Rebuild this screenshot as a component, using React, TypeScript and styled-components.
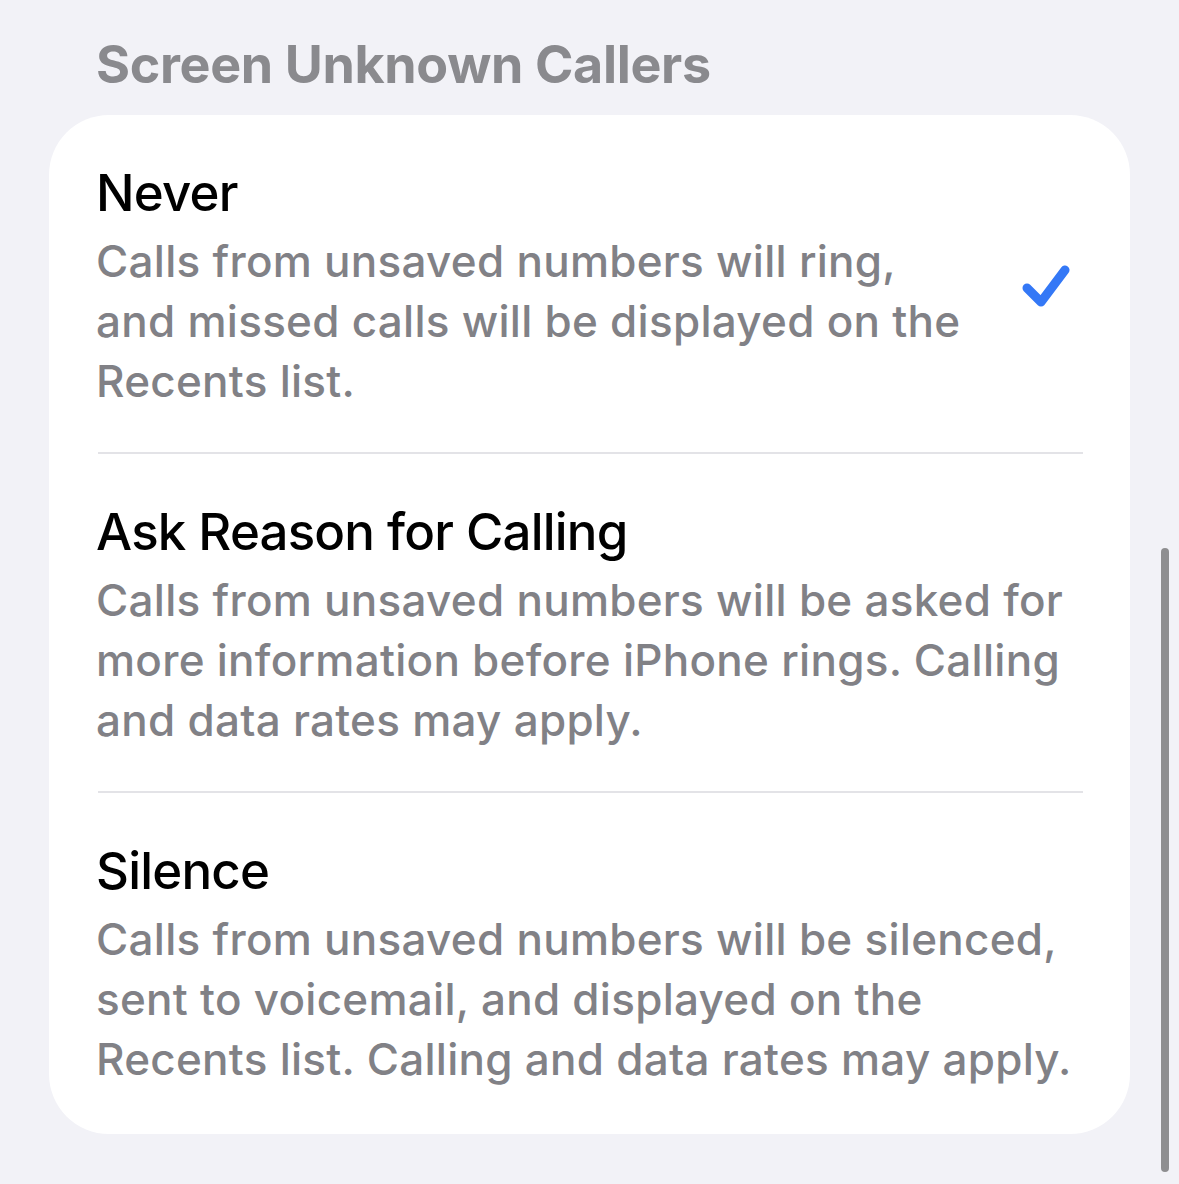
import React from 'react';
import styled, { createGlobalStyle } from 'styled-components';

const GlobalStyle = createGlobalStyle`
  html, body {
    margin: 0;
    padding: 0;
    background: #f2f2f7;
  }
  body {
    font-family: Inter, "Noto Sans", sans-serif;
    -webkit-font-smoothing: antialiased;
  }
`;

const Page = styled.div`
  position: relative;
  width: 1179px;
  height: 1184px;
  overflow: hidden;
  background: #f2f2f7;
  padding: 0 49px;
  box-sizing: border-box;
`;

const SectionHeader = styled.h2`
  margin: 0;
  padding: 33px 0 0 47px;
  height: 115px;
  box-sizing: border-box;
  font-size: 52px;
  line-height: 64px;
  font-weight: 700;
  color: #8a8a8e;
  letter-spacing: -0.35px;
`;

const Card = styled.div`
  background: #ffffff;
  border-radius: 60px;
  width: 1081px;
  overflow: hidden;
`;

const Row = styled.div`
  display: flex;
  align-items: center;
  padding: 48px 47px 0 49px;
`;

const RowBody = styled.div<{ $last?: boolean }>`
  flex: 1;
  display: flex;
  align-items: center;
  padding-bottom: ${(p) => (p.$last ? '45px' : '41px')};
  border-bottom: ${(p) => (p.$last ? 'none' : '2px solid #e3e3e7')};
`;

const TextBlock = styled.div`
  flex: 1;
  margin-left: -2px;
`;

const Title = styled.div`
  font-size: 51px;
  line-height: 60px;
  font-weight: 500;
  color: #000000;
  letter-spacing: -0.8px;
  white-space: nowrap;
`;

const Description = styled.div`
  margin-top: 8px;
  font-size: 44px;
  line-height: 60px;
  font-weight: 500;
  color: #818186;
  letter-spacing: 0.27px;
  white-space: nowrap;
`;

const Check = styled.svg`
  width: 50px;
  height: 48px;
  margin-right: 11px;
  flex-shrink: 0;
`;

const ScrollBar = styled.div`
  position: absolute;
  left: 1161px;
  top: 548px;
  width: 8px;
  height: 624px;
  border-radius: 4px;
  background: #8e8e90;
`;

type Option = { title: string; lines: string[]; selected?: boolean };

const options: Option[] = [
  {
    title: 'Never',
    lines: [
      'Calls from unsaved numbers will ring,',
      'and missed calls will be displayed on the',
      'Recents list.',
    ],
    selected: true,
  },
  {
    title: 'Ask Reason for Calling',
    lines: [
      'Calls from unsaved numbers will be asked for',
      'more information before iPhone rings. Calling',
      'and data rates may apply.',
    ],
  },
  {
    title: 'Silence',
    lines: [
      'Calls from unsaved numbers will be silenced,',
      'sent to voicemail, and displayed on the',
      'Recents list. Calling and data rates may apply.',
    ],
  },
];

const CheckMark = () => (
  <Check viewBox="0 0 50 48">
    <path
      d="M5 25 L19 39 L43 7"
      fill="none"
      stroke="#3478f6"
      strokeWidth="9"
      strokeLinecap="round"
      strokeLinejoin="round"
    />
  </Check>
);

const App = () => {
  return (
    <Page>
      <GlobalStyle />
      <SectionHeader>Screen Unknown Callers</SectionHeader>
      <Card>
        {options.map((o, i) => (
          <Row key={o.title}>
            <RowBody $last={i === options.length - 1}>
              <TextBlock>
                <Title>{o.title}</Title>
                <Description>
                  {o.lines.map((l, j) => (
                    <React.Fragment key={j}>
                      {l}
                      {j < o.lines.length - 1 && <br />}
                    </React.Fragment>
                  ))}
                </Description>
              </TextBlock>
              {o.selected && <CheckMark />}
            </RowBody>
          </Row>
        ))}
      </Card>
      <ScrollBar />
    </Page>
  );
};

export default App;
